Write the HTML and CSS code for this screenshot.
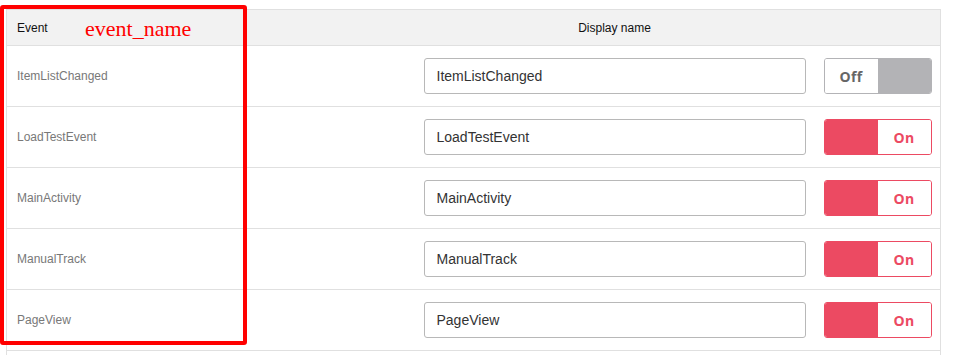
FILE: index.html
```html
<!DOCTYPE html>
<html lang="en">
<head>
    <meta charset="UTF-8">
    <title>Event names</title>
    <link rel="stylesheet" href="styles.css">
</head>
<body>

    <div class="page">
        <table class="events">
            <thead>
                <tr>
                    <th class="col-event">Event</th>
                    <th class="col-display">Display name</th>
                    <th class="col-toggle"></th>
                </tr>
            </thead>
            <tbody>
                <tr>
                    <td class="event-name">ItemListChanged</td>
                    <td class="col-display"><input class="name-input" type="text" value="ItemListChanged"></td>
                    <td class="col-toggle">
                        <div class="toggle off"><span class="knob-label">Off</span><span class="knob"></span></div>
                    </td>
                </tr>
                <tr>
                    <td class="event-name">LoadTestEvent</td>
                    <td class="col-display"><input class="name-input" type="text" value="LoadTestEvent"></td>
                    <td class="col-toggle">
                        <div class="toggle on"><span class="knob"></span><span class="knob-label">On</span></div>
                    </td>
                </tr>
                <tr>
                    <td class="event-name">MainActivity</td>
                    <td class="col-display"><input class="name-input" type="text" value="MainActivity"></td>
                    <td class="col-toggle">
                        <div class="toggle on"><span class="knob"></span><span class="knob-label">On</span></div>
                    </td>
                </tr>
                <tr>
                    <td class="event-name">ManualTrack</td>
                    <td class="col-display"><input class="name-input" type="text" value="ManualTrack"></td>
                    <td class="col-toggle">
                        <div class="toggle on"><span class="knob"></span><span class="knob-label">On</span></div>
                    </td>
                </tr>
                <tr>
                    <td class="event-name">PageView</td>
                    <td class="col-display"><input class="name-input" type="text" value="PageView"></td>
                    <td class="col-toggle">
                        <div class="toggle on"><span class="knob"></span><span class="knob-label">On</span></div>
                    </td>
                </tr>
                <tr class="row-cut">
                    <td class="event-name"></td>
                    <td class="col-display"></td>
                    <td class="col-toggle"></td>
                </tr>
            </tbody>
        </table>

        <!-- annotation drawn over the first column -->
        <div class="highlight">
            <span class="highlight-label">event_name</span>
        </div>
    </div>

</body>
</html>
```

FILE: styles.css
```css
* {
    margin: 0;
    padding: 0;
    box-sizing: border-box;
}

html, body {
    height: 100%;
    overflow: hidden;
}

body {
    font-family: 'Liberation Sans', Arial, sans-serif;
    background-color: #fff;
    color: #333;
}

.page {
    position: relative;
    padding: 9px 0 0 6px;
}

.events {
    width: 934px;
    border-collapse: collapse;
    table-layout: fixed;
    border: 1px solid #e0e0e0;
}

.events th {
    height: 36px;
    background-color: #f2f2f2;
    font-size: 12px;
    font-weight: 400;
    color: #111;
    border-bottom: 1px solid #e0e0e0;
}

.col-event {
    width: 405px;
    text-align: left;
    padding-left: 10px;
}

.col-display {
    width: 406px;
    text-align: center;
    padding: 0 12px;
}

.col-toggle {
    width: 123px;
    padding: 0 6px;
}

.events td {
    height: 61px;
    border-bottom: 1px solid #e0e0e0;
    vertical-align: middle;
}

.events .row-cut td {
    height: 20px;
}

.event-name {
    padding-left: 10px;
    font-size: 12px;
    color: #787878;
}

.name-input {
    display: block;
    width: 100%;
    height: 36px;
    padding: 0 12px;
    border: 1px solid #b8b8b8;
    border-radius: 3px;
    font-family: 'Liberation Sans', Arial, sans-serif;
    font-size: 14px;
    color: #333;
    outline: none;
}

.toggle {
    display: flex;
    width: 108px;
    height: 36px;
    border-radius: 3px;
    overflow: hidden;
    font-family: 'Open Sans', 'Liberation Sans', sans-serif;
    font-size: 14px;
    font-weight: 700;
    letter-spacing: 0.4px;
}

.toggle span {
    flex: 1;
    display: flex;
    align-items: center;
    justify-content: center;
}

.toggle.off {
    border: 1px solid #b3b3b6;
}

.toggle.off .knob-label {
    color: #666;
    background-color: #fff;
}

.toggle.off .knob {
    background-color: #b3b3b6;
}

.toggle.on {
    border: 1px solid #ec4a62;
}

.toggle.on .knob {
    background-color: #ec4a62;
}

.toggle.on .knob-label {
    color: #ec4a62;
    background-color: #fff;
}

.highlight {
    position: absolute;
    left: 0;
    top: 5px;
    width: 247px;
    height: 340px;
    border: 4px solid #ff0000;
    border-radius: 3px;
}

.highlight-label {
    position: absolute;
    left: 81px;
    top: 7px;
    font-family: 'Liberation Serif', 'Times New Roman', serif;
    font-size: 22px;
    color: #ff0000;
}
```
